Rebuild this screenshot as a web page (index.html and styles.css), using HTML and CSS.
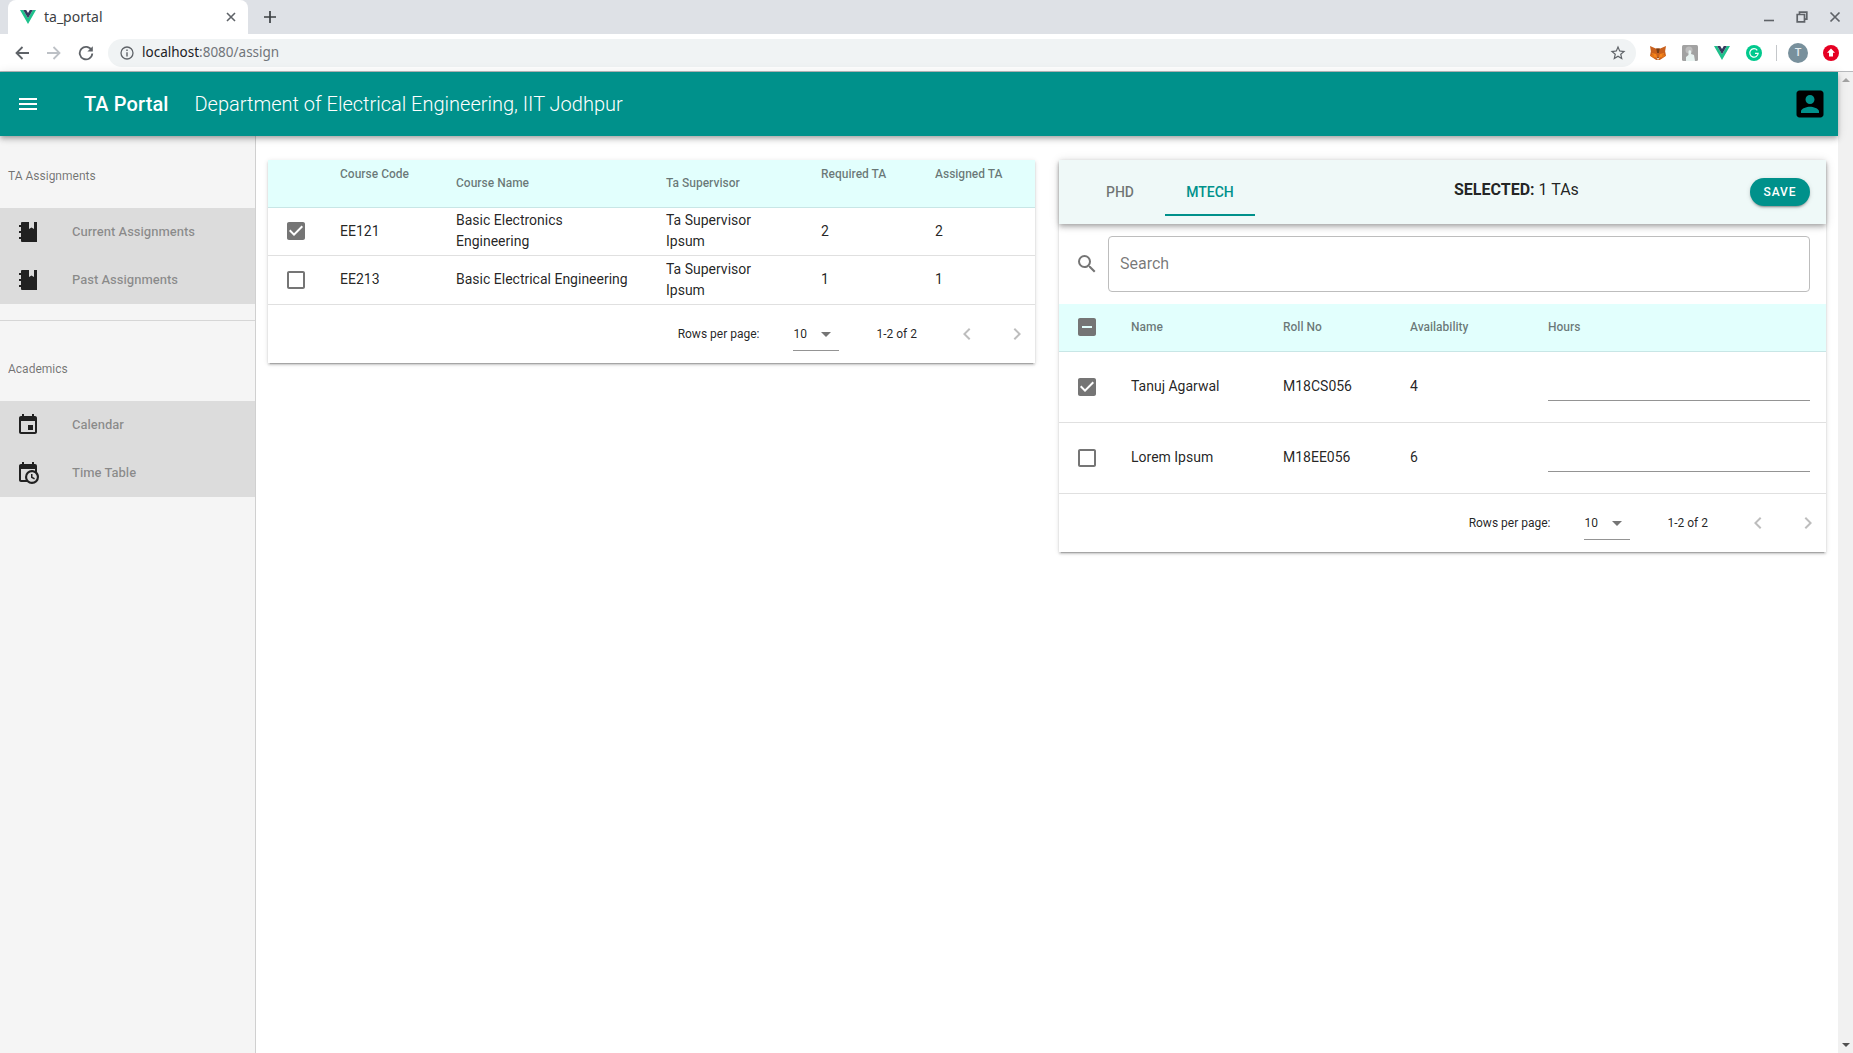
FILE: index.html
```html
<!DOCTYPE html>
<html lang="en">
<head>
<meta charset="utf-8">
<title>ta_portal</title>
<link rel="stylesheet" href="styles.css">
</head>
<body>
<div class="browser">
  <div class="tabstrip">
    <div class="tab">
      <svg class="favicon" viewBox="0 0 16 14"><path fill="#1fc18c" d="M0 0h3.200L8 8.200 12.800 0H16L8 14z"/><path fill="#35395e" d="M3.200 0h3L8 3.100 9.800 0h3L8 8.200z"/></svg>
      <span class="tab-title">ta_portal</span>
      <svg class="tab-close" viewBox="0 0 10 10"><path d="M1 1l8 8M9 1L1 9" stroke="#5f6368" stroke-width="1.600" fill="none"/></svg>
    </div>
    <svg class="new-tab" viewBox="0 0 14 14"><path d="M7 1v12M1 7h12" stroke="#3c4043" stroke-width="1.700" fill="none"/></svg>
    <div class="window-controls">
      <svg class="win-btn" viewBox="0 0 12 12"><path d="M1 9.500h10" stroke="#5f6368" stroke-width="1.600" fill="none"/></svg>
      <svg class="win-btn" viewBox="0 0 12 12"><path d="M3.500 3V1.200h7.300v7H8.500M1.200 3.500h7.300v7.300H1.200z" stroke="#5f6368" stroke-width="1.700" fill="none"/></svg>
      <svg class="win-btn" viewBox="0 0 12 12"><path d="M1.500 1.500l9 9M10.500 1.500l-9 9" stroke="#5f6368" stroke-width="1.700" fill="none"/></svg>
    </div>
  </div>
  <div class="toolbar">
    <svg class="nav" viewBox="0 0 16 16"><path d="M15 8H2.500M8.500 2l-6 6 6 6" stroke="#5f6368" stroke-width="1.800" fill="none"/></svg>
    <svg class="nav" viewBox="0 0 16 16"><path d="M1 8h12.500M7.500 2l6 6-6 6" stroke="#bdc1c6" stroke-width="1.800" fill="none"/></svg>
    <svg class="nav" viewBox="0 0 16 16"><path d="M13.600 5.200A6.300 6.300 0 1 0 14.300 8.500" stroke="#5f6368" stroke-width="1.800" fill="none"/><path d="M14.800 1.200v5.400H9.400z" fill="#5f6368"/></svg>
    <div class="urlbar">
      <svg class="url-info" viewBox="0 0 14 14"><circle cx="7" cy="7" r="6" stroke="#5f6368" stroke-width="1.300" fill="none"/><path d="M6.300 6.200h1.400v4.200H6.300zM6.300 3.600h1.400V5H6.300z" fill="#5f6368"/></svg>
      <span class="url-host">localhost</span><span class="url-rest">:8080/assign</span>
      <svg class="url-star" viewBox="0 0 24 24"><path d="M22 9.240l-7.190-.62L12 2 9.190 8.630 2 9.240l5.460 4.730L5.820 21 12 17.270 18.180 21l-1.630-7.030L22 9.240zM12 15.400l-3.760 2.270 1-4.280-3.320-2.880 4.380-.38L12 6.100l1.710 4.040 4.380.38-3.320 2.880 1 4.280L12 15.400z" fill="#5f6368"/></svg>
    </div>
    <div class="ext">
      <svg viewBox="0 0 18 16"><path fill="#c9601c" d="M0 0l6.500 3h5L18 0l-1 6 1 5-4 3-3 2H7l-3-2-4-3 1-5z"/><path fill="#f6851b" d="M2 8l5 1 1 4H5zM16 8l-5 1-1 4h3z"/><path fill="#e2761b" d="M0 11l4-2 1 5zM18 11l-4-2-1 5z"/><path fill="#763d16" d="M7 3h4l-1 5H8zM7.500 13h3L9 15z"/><path fill="#f4e4d4" d="M7 13l2 3 2-3-2 1z"/></svg>
    </div>
    <div class="ext">
      <svg viewBox="0 0 16 16"><rect width="16" height="16" rx="1.500" fill="#a2a2a2"/><circle cx="7" cy="5" r="3.500" fill="#bdbdbd"/><path fill="#e8f3f1" d="M4 16v-4l2.500-2V6.500a1.300 1.300 0 0 1 2.600 0V9l2.900 1 1 6z"/></svg>
    </div>
    <div class="ext">
      <svg viewBox="0 0 16 14"><path fill="#1fc18c" d="M0 0h3.200L8 8.200 12.800 0H16L8 14z"/><path fill="#35395e" d="M3.200 0h3L8 3.100 9.800 0h3L8 8.200z"/></svg>
    </div>
    <div class="ext">
      <svg viewBox="0 0 16 16"><circle cx="8" cy="8" r="8" fill="#00c98d"/><path d="M11.300 5.300A4.200 4.200 0 1 0 12.200 8.300H9" stroke="#fff" stroke-width="1.200" fill="none"/></svg>
    </div>
    <div class="toolbar-sep"></div>
    <div class="profile">T</div>
    <div class="ext">
      <svg viewBox="0 0 16 16"><circle cx="8" cy="8" r="8" fill="#e60023"/><path fill="#fff" d="M8 3.500l4 4.300H10v3.700H6V7.800H4z"/></svg>
    </div>
  </div>

  <div class="viewport">
    <div class="app">
      <header class="appbar">
        <svg class="menu-icon" viewBox="0 0 24 24"><path d="M3 18h18v-2H3v2zm0-5h18v-2H3v2zm0-7v2h18V6H3z" fill="#fff"/></svg>
        <div class="brand">TA Portal</div>
        <div class="dept">Department of Electrical Engineering, IIT Jodhpur</div>
        <svg class="account" viewBox="0 0 24 24"><path d="M3 5v14c0 1.100.890 2 2 2h14c1.100 0 2-.900 2-2V5c0-1.100-.900-2-2-2H5c-1.110 0-2 .900-2 2zm12 4c0 1.660-1.340 3-3 3s-3-1.340-3-3 1.340-3 3-3 3 1.340 3 3zm-9 8c0-2 4-3.100 6-3.100s6 1.100 6 3.100v1H6v-1z" fill="#000"/></svg>
      </header>
      <div class="content">
        <aside class="sidebar">
          <div class="side-label first">TA Assignments</div>
          <div class="side-group">
            <div class="side-item">
              <svg class="side-icon" viewBox="0 0 24 24"><path class="book" fill-rule="evenodd" d="M6 2h15v20H6a1 1 0 0 1-1-1V3a1 1 0 0 1 1-1zM13 2v7l2.500-1.500L18 9V2zM3 5h2v2H3zM3 11h2v2H3zM3 17h2v2H3z"/></svg>
              <span class="side-text">Current Assignments</span>
            </div>
            <div class="side-item">
              <svg class="side-icon" viewBox="0 0 24 24"><path class="book" fill-rule="evenodd" d="M6 2h15v20H6a1 1 0 0 1-1-1V3a1 1 0 0 1 1-1zM13 2v7l2.500-1.500L18 9V2zM3 5h2v2H3zM3 11h2v2H3zM3 17h2v2H3z"/></svg>
              <span class="side-text">Past Assignments</span>
            </div>
          </div>
          <div class="side-divider"></div>
          <div class="side-label">Academics</div>
          <div class="side-group">
            <div class="side-item">
              <svg class="side-icon" viewBox="0 0 24 24"><path d="M17 12h-5v5h5v-5zM16 1v2H8V1H6v2H5c-1.110 0-1.990.900-1.990 2L3 19c0 1.100.890 2 2 2h14c1.100 0 2-.900 2-2V5c0-1.100-.900-2-2-2h-1V1h-2zm3 18H5V8h14v11z"/></svg>
              <span class="side-text">Calendar</span>
            </div>
            <div class="side-item">
              <svg class="side-icon" viewBox="0 0 24 24"><path d="M15,13H16.500V15.820L18.940,17.230L18.190,18.530L15,16.690V13M19,8H5V19H9.670C9.240,18.090 9,17.070 9,16A7,7 0 0,1 16,9C17.070,9 18.090,9.240 19,9.670V8M5,21C3.890,21 3,20.100 3,19V5C3,3.890 3.890,3 5,3H6V1H8V3H16V1H18V3H19A2,2 0 0,1 21,5V11.100C22.240,12.360 23,14.090 23,16A7,7 0 0,1 16,23C14.090,23 12.360,22.240 11.100,21H5M16,11.150A4.850,4.850 0 0,0 11.150,16C11.150,18.680 13.320,20.850 16,20.850A4.850,4.850 0 0,0 20.850,16C20.850,13.320 18.680,11.150 16,11.150Z"/></svg>
              <span class="side-text">Time Table</span>
            </div>
          </div>
        </aside>
        <main class="main">
          <section class="card">
            <table class="table courses">
              <colgroup><col class="c-check"><col class="c-code"><col class="c-name"><col class="c-sup"><col class="c-req"><col></colgroup>
              <thead>
                <tr>
                  <th></th>
                  <th class="top">Course Code</th>
                  <th>Course Name</th>
                  <th>Ta Supervisor</th>
                  <th class="top">Required TA</th>
                  <th class="top">Assigned TA</th>
                </tr>
              </thead>
              <tbody>
                <tr>
                  <td class="check"><svg class="cb" viewBox="0 0 24 24"><path d="M19 3H5c-1.110 0-2 .900-2 2v14c0 1.100.890 2 2 2h14c1.110 0 2-.890 2-2V5c0-1.110-.890-2-2-2zm-9 14l-5-5 1.410-1.410L10 14.170l7.590-7.590L19 8l-9 9z"/></svg></td>
                  <td>EE121</td>
                  <td>Basic Electronics Engineering</td>
                  <td>Ta Supervisor Ipsum</td>
                  <td>2</td>
                  <td>2</td>
                </tr>
                <tr>
                  <td class="check"><svg class="cb" viewBox="0 0 24 24"><path d="M19 5v14H5V5h14m0-2H5c-1.100 0-2 .900-2 2v14c0 1.100.900 2 2 2h14c1.100 0 2-.900 2-2V5c0-1.100-.900-2-2-2z"/></svg></td>
                  <td>EE213</td>
                  <td>Basic Electrical Engineering</td>
                  <td>Ta Supervisor Ipsum</td>
                  <td>1</td>
                  <td>1</td>
                </tr>
              </tbody>
            </table>
            <div class="pager">
              <span class="pager-label">Rows per page:</span>
              <div class="pager-select"><span>10</span><svg class="pager-arrow" viewBox="0 0 24 24"><path d="M7 10l5 5 5-5z"/></svg></div>
              <span class="pager-range">1-2 of 2</span>
              <svg class="chev" viewBox="0 0 24 24"><path d="M15.410 7.410L14 6l-6 6 6 6 1.410-1.410L10.830 12z"/></svg>
              <svg class="chev next" viewBox="0 0 24 24"><path d="M10 6L8.590 7.410 13.170 12l-4.580 4.590L10 18l6-6z"/></svg>
            </div>
          </section>

          <section class="card">
            <div class="tabsbar">
              <div class="tab-item">PHD</div>
              <div class="tab-item active">MTECH</div>
              <div class="selected"><b>SELECTED:</b> 1 TAs</div>
              <button class="save">SAVE</button>
            </div>
            <div class="searchrow">
              <svg class="search-icon" viewBox="0 0 24 24"><path d="M15.500 14h-.790l-.280-.270A6.470 6.470 0 0 0 16 9.500 6.500 6.500 0 1 0 9.500 16c1.610 0 3.090-.590 4.230-1.570l.270.280v.790l5 4.990L20.490 19l-4.990-5zm-6 0C7.010 14 5 11.990 5 9.500S7.010 5 9.500 5 14 7.010 14 9.500 11.990 14 9.500 14z"/></svg>
              <div class="searchbox">Search</div>
            </div>
            <table class="table tas">
              <colgroup><col class="t-check"><col class="t-name"><col class="t-roll"><col class="t-avail"><col></colgroup>
              <thead>
                <tr>
                  <th class="check"><svg class="cb" viewBox="0 0 24 24"><path d="M19 3H5c-1.100 0-2 .900-2 2v14c0 1.100.900 2 2 2h14c1.100 0 2-.900 2-2V5c0-1.100-.900-2-2-2zm-2 10H7v-2h10v2z"/></svg></th>
                  <th>Name</th>
                  <th>Roll No</th>
                  <th>Availability</th>
                  <th>Hours</th>
                </tr>
              </thead>
              <tbody>
                <tr>
                  <td class="check"><svg class="cb" viewBox="0 0 24 24"><path d="M19 3H5c-1.110 0-2 .900-2 2v14c0 1.100.890 2 2 2h14c1.110 0 2-.890 2-2V5c0-1.110-.890-2-2-2zm-9 14l-5-5 1.410-1.410L10 14.170l7.590-7.590L19 8l-9 9z"/></svg></td>
                  <td>Tanuj Agarwal</td>
                  <td>M18CS056</td>
                  <td>4</td>
                  <td class="hours-cell"><div class="hours"></div></td>
                </tr>
                <tr>
                  <td class="check"><svg class="cb" viewBox="0 0 24 24"><path d="M19 5v14H5V5h14m0-2H5c-1.100 0-2 .900-2 2v14c0 1.100.900 2 2 2h14c1.100 0 2-.900 2-2V5c0-1.100-.900-2-2-2z"/></svg></td>
                  <td>Lorem Ipsum</td>
                  <td>M18EE056</td>
                  <td>6</td>
                  <td class="hours-cell"><div class="hours"></div></td>
                </tr>
              </tbody>
            </table>
            <div class="pager">
              <span class="pager-label">Rows per page:</span>
              <div class="pager-select"><span>10</span><svg class="pager-arrow" viewBox="0 0 24 24"><path d="M7 10l5 5 5-5z"/></svg></div>
              <span class="pager-range">1-2 of 2</span>
              <svg class="chev" viewBox="0 0 24 24"><path d="M15.410 7.410L14 6l-6 6 6 6 1.410-1.410L10.830 12z"/></svg>
              <svg class="chev next" viewBox="0 0 24 24"><path d="M10 6L8.590 7.410 13.170 12l-4.580 4.590L10 18l6-6z"/></svg>
            </div>
          </section>
        </main>
      </div>
    </div>
    <div class="scrollbar"><span class="sb-up"></span><span class="sb-down"></span></div>
  </div>
</div>
</body>
</html>
```

FILE: styles.css
```css
* { box-sizing: border-box; }
html, body { margin: 0; height: 100%; overflow: hidden; background: #fff; }
body { font-family: Roboto, sans-serif; color: rgba(0,0,0,.87); }
.browser { display: flex; flex-direction: column; height: 1053px; }

/* browser chrome */
.tabstrip { height: 34px; flex: none; background: #dee1e6; display: flex; align-items: center; padding-left: 8px; }
.tab { width: 240px; height: 34px; background: #fff; border-radius: 8px 8px 0 0; display: flex; align-items: center; padding: 0 12px; }
.favicon { width: 16px; height: 14px; flex: none; }
.tab-title { font: 14px "Noto Sans", sans-serif; color: #3c4043; margin: 0 0 2px 8px; flex: 1; }
.tab-close { width: 10px; height: 10px; flex: none; }
.new-tab { width: 14px; height: 14px; margin-left: 15px; flex: none; }
.window-controls { margin-left: auto; display: flex; gap: 21px; padding-right: 12px; }
.win-btn { width: 12px; height: 12px; display: block; }
.toolbar { height: 38px; flex: none; background: #fff; border-bottom: 1px solid #b8babd; display: flex; align-items: center; padding: 0 6px 0 14px; }
.nav { width: 16px; height: 16px; margin-right: 16px; flex: none; }
.urlbar { width: 1528px; height: 28px; margin: 0 6px 0 -2px; flex: none; border-radius: 14px; background: #f0f3f4; display: flex; align-items: center; padding: 0 9px 0 12px; font: 13.5px "Noto Sans", sans-serif; }
.url-info { width: 14px; height: 14px; margin-right: 8px; flex: none; }
.url-host { color: #202124; margin-bottom: 2px; }
.url-rest { color: #70757a; margin-bottom: 2px; }
.url-star { width: 18px; height: 18px; margin-left: auto; flex: none; }
.ext { width: 32px; height: 24px; flex: none; display: flex; align-items: center; justify-content: center; }
.ext svg { width: 16px; height: 16px; display: block; }
.toolbar-sep { width: 1px; height: 16px; background: #c4c7ca; margin: 0 5px 0 6px; flex: none; }
.profile { width: 20px; height: 20px; flex: none; border-radius: 50%; background: #78909c; color: #e4ecef; font: 500 11px/20px Roboto, sans-serif; text-align: center; margin: 0 7px 0 6px; }

/* viewport */
.viewport { flex: 1; min-height: 0; display: flex; }
.app { flex: 1; min-width: 0; display: flex; flex-direction: column; }
.scrollbar { width: 15px; flex: none; background: #f1f1f1; display: flex; flex-direction: column; justify-content: space-between; align-items: center; padding: 6px 0; }
.sb-up, .sb-down { width: 0; height: 0; border-left: 4px solid transparent; border-right: 4px solid transparent; }
.sb-up { border-bottom: 4px solid #a3a3a3; }
.sb-down { border-top: 4px solid #505050; }

.appbar { height: 64px; flex: none; background: #00918b; display: flex; align-items: center; position: relative; z-index: 2; padding: 0 10px 0 16px; box-shadow: 0 2px 4px -1px rgba(0,0,0,.2), 0 4px 5px 0 rgba(0,0,0,.14), 0 1px 10px 0 rgba(0,0,0,.12); color: #fff; }
.menu-icon { width: 24px; height: 24px; flex: none; }
.brand { font-size: 20px; font-weight: 500; margin-left: 44px; letter-spacing: .1px; }
.dept { font-size: 20px; font-weight: 300; margin-left: 26px; }
.account { width: 36px; height: 36px; margin-left: auto; flex: none; }

.content { flex: 1; min-height: 0; display: flex; }
.sidebar { width: 256px; flex: none; background: #f5f5f5; border-right: 1px solid #d0d0d0; }
.side-label { font-size: 12px; line-height: 16px; color: rgba(0,0,0,.54); padding: 40px 8px 24px; }
.side-label.first { padding-top: 32px; }
.side-group { background: #dcdcdc; }
.side-item { height: 48px; display: flex; align-items: center; padding-left: 16px; font-size: 13px; font-weight: 500; color: rgba(0,0,0,.38); }
.side-text { margin-bottom: 2px; }
.side-icon { width: 24px; height: 24px; margin-right: 32px; flex: none; fill: #212121; }
.side-divider { height: 1px; background: #d6d6d6; margin-top: 16px; }

.main { flex: 1; min-width: 0; display: grid; grid-template-columns: 1fr 1fr; column-gap: 24px; align-items: start; padding: 24px 12px 0; }
.card { background: #fff; box-shadow: 0 3px 1px -2px rgba(0,0,0,.2), 0 2px 2px 0 rgba(0,0,0,.14), 0 1px 5px 0 rgba(0,0,0,.12); }

.table { width: 100%; table-layout: fixed; border-collapse: separate; border-spacing: 0; }
.table th { height: 48px; background: #e2fffd; border-bottom: 1px solid #c8e6e6; padding: 0 16px 2px; font-size: 12px; font-weight: 500; line-height: 14px; color: rgba(0,0,0,.54); text-align: left; }
.table th.top { vertical-align: top; padding-top: 7px; }
.table td { height: 48px; border-bottom: 1px solid #e0e0e0; padding: 2px 16px 3px; font-size: 14px; line-height: 21px; }
.table .check { padding: 0 0 1px 16px; }
.table th.check { padding-bottom: 2px; }
.courses tbody tr:last-child td { height: 49px; }
.cb { display: block; width: 24px; height: 24px; fill: #757575; }
.tas td { height: 71px; padding-bottom: 4px; }
.tas .check { padding: 0 0 1px 16px; }
.tas .hours-cell { padding: 0 16px; }
.c-check, .t-check { width: 56px; }
.c-code { width: 116px; }
.c-name { width: 210px; }
.c-sup { width: 155px; }
.c-req { width: 114px; }
.t-name { width: 152px; }
.t-roll { width: 127px; }
.t-avail { width: 138px; }
.hours { height: 28px; border-bottom: 1px solid #949494; }

.pager { height: 58px; display: flex; align-items: center; justify-content: flex-end; padding-right: 6px; font-size: 12px; color: rgba(0,0,0,.87); }
.pager-label { margin-right: 34px; }
.pager-select { width: 46px; height: 34px; display: flex; align-items: center; border-bottom: 1px solid #949494; position: relative; }
.pager-arrow { width: 24px; height: 24px; margin-left: auto; margin-right: 1px; fill: #757575; }
.pager-range { margin: 0 38px 0 37px; }
.chev { width: 24px; height: 24px; fill: rgba(0,0,0,.26); flex: none; }
.chev.next { margin-left: 26px; }

.tabsbar { height: 64px; display: flex; align-items: flex-start; background: #eff9f8; padding: 8px 16px; position: relative; box-shadow: 0 2px 4px -1px rgba(0,0,0,.2), 0 4px 5px 0 rgba(0,0,0,.14), 0 1px 10px 0 rgba(0,0,0,.12); }
.tab-item { width: 90px; height: 48px; display: flex; align-items: center; justify-content: center; padding-top: 2px; font-size: 14px; font-weight: 500; color: rgba(0,0,0,.54); border-bottom: 2px solid transparent; }
.tab-item.active { color: #00918b; border-bottom-color: #00918b; }
.selected { margin-left: 199px; font-size: 16px; line-height: 24px; margin-top: 10px; white-space: nowrap; }
.selected b { font-weight: 700; }
.save { margin-left: auto; margin-top: 10px; width: 60px; height: 28px; border: 0; border-radius: 14px; background: #00918b; color: #fff; font: 500 12px Roboto, sans-serif; letter-spacing: .9px; padding: 0; box-shadow: 0 3px 1px -2px rgba(0,0,0,.2), 0 2px 2px 0 rgba(0,0,0,.14), 0 1px 5px 0 rgba(0,0,0,.12); }
.searchrow { display: flex; align-items: center; padding: 12px 16px; }
.search-icon { width: 24px; height: 24px; flex: none; fill: #757575; }
.searchbox { flex: 1; height: 56px; margin-left: 9px; border: 1px solid #bdbdbd; border-radius: 4px; display: flex; align-items: center; padding: 0 11px 2px; font-size: 16px; color: rgba(0,0,0,.54); }
```
